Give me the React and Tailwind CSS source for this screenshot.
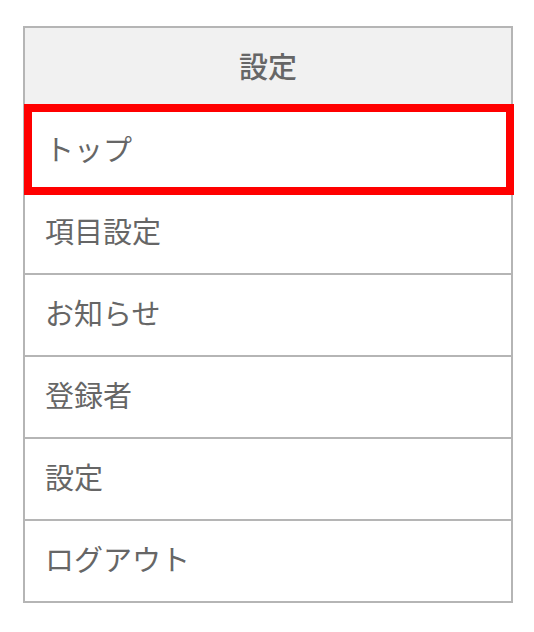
const menuItems = ['トップ', '項目設定', 'お知らせ', '登録者', '設定', 'ログアウト']

export default function App() {
  const selected = 0

  return (
    <div
      className="min-h-screen w-full bg-white pt-[26px] pl-[23px]"
      style={{ fontFamily: '"Noto Sans CJK JP", "Noto Sans", sans-serif' }}
    >
      <div className="w-[490px] border-2 border-[#b5b5b5] bg-white">
        <div className="flex h-[83px] items-center justify-center border-b-2 border-[#b5b5b5] bg-[#f1f1f1] pb-[5px] text-[29px] font-medium text-[#666666]">
          設定
        </div>
        <ul>
          {menuItems.map((item, i) => (
            <li
              key={item}
              className={`relative flex items-center pb-[5px] pl-[20px] text-[29px] text-[#666666] ${
                i < menuItems.length - 1 ? 'h-[82px] border-b-2 border-[#b5b5b5]' : 'h-[80px]'
              }`}
            >
              {item}
              {i === selected && (
                <div className="pointer-events-none absolute -top-[7px] -bottom-[4px] -left-[1px] -right-[3px] z-10 border-8 border-[#ff0000]" />
              )}
            </li>
          ))}
        </ul>
      </div>
    </div>
  )
}
